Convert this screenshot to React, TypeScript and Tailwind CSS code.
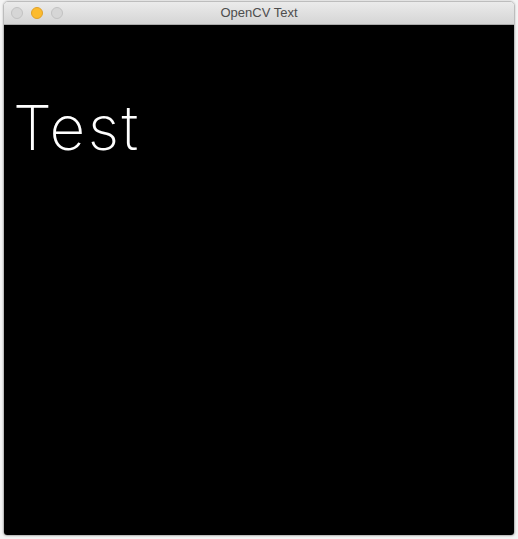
const TrafficLight = ({ color, border }: { color: string; border: string }) => (
  <span className={`block h-[12px] w-[12px] rounded-full border ${color} ${border}`} />
);

const App = () => {
  return (
    <div className="h-[539px] w-[518px] overflow-hidden bg-[#f4f4f4] pl-[3px] pt-[1px]">
      <div className="flex h-[535px] w-[512px] flex-col overflow-hidden rounded-t-[5px] rounded-b-[4px] border border-[#bdbdbd] shadow-[0_0_2px_rgba(0,0,0,0.25)]">
        <div className="relative flex h-[23px] shrink-0 items-center border-b border-[#ababab] bg-gradient-to-b from-[#ebebeb] to-[#d5d5d5] pl-[7px]">
          <div className="flex gap-[8px]">
            <TrafficLight color="bg-[#d6d6d6]" border="border-[#c2c2c2]" />
            <TrafficLight color="bg-[#fcbb2e]" border="border-[#e0a129]" />
            <TrafficLight color="bg-[#d6d6d6]" border="border-[#c2c2c2]" />
          </div>
          <span
            className="absolute inset-x-0 text-center text-[13px] text-[#4d4d4d]"
            style={{ fontFamily: '"Helvetica Neue", "Liberation Sans", Arial, sans-serif' }}
          >
            OpenCV Text
          </span>
        </div>
        <div className="flex-1 bg-black pl-[9px] pt-[72px]">
          <div
            className="text-[62px] font-extralight leading-none tracking-[2.5px] text-white"
            style={{ fontFamily: 'Inter, "DejaVu Sans", sans-serif' }}
          >
            Test
          </div>
        </div>
      </div>
    </div>
  );
};

export default App;
